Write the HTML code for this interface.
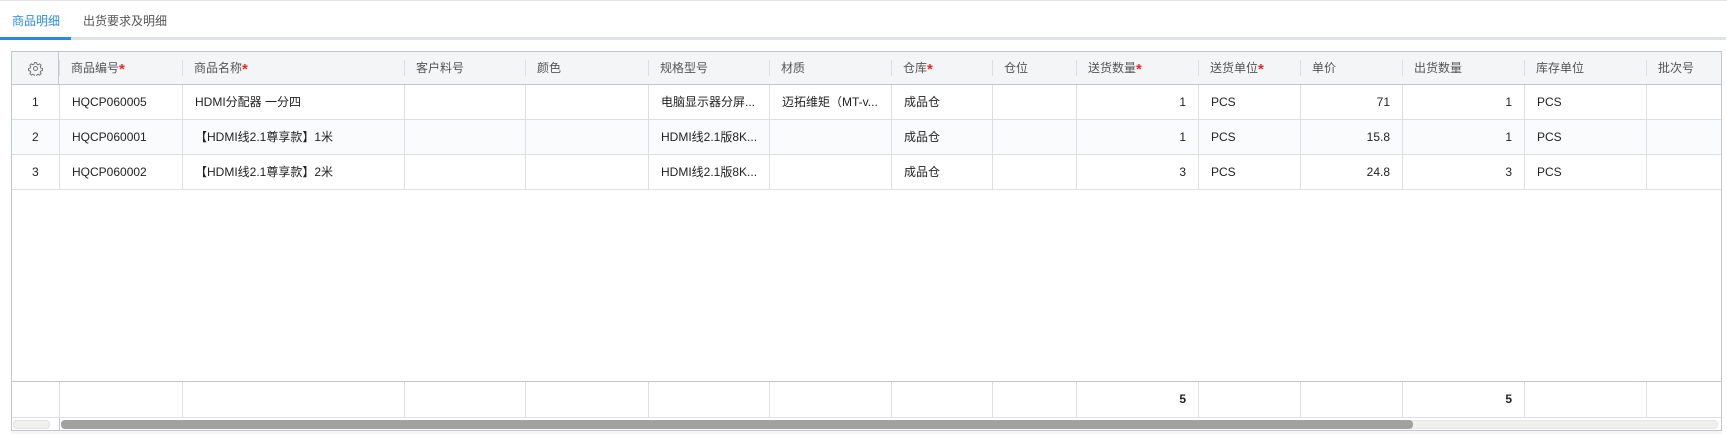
<!DOCTYPE html>
<html><head><meta charset="utf-8"><style>
*{box-sizing:border-box;margin:0;padding:0}
body{width:1727px;height:434px;background:#fff;font-family:"Liberation Sans","Noto Sans CJK SC",sans-serif;font-size:12px;color:#222;position:relative;overflow:hidden}
.topline{position:absolute;left:0;top:0;width:1727px;height:1px;background:#e4e7ea}
.tabs{position:absolute;left:0;top:0;width:1726px;height:40px;border-bottom:3px solid #dfe3e8}
.tab{position:absolute;top:12px;font-size:12px;color:#555}
.tab.a{color:#2a8bde;left:12px}
.ul{position:absolute;left:0;top:37px;width:71px;height:3px;background:#2a8bde}
.box{position:absolute;left:11px;top:51px;width:1711px;height:380px;border:1px solid #c3c7cc}
.cell{position:absolute;height:100%;top:0;white-space:nowrap;overflow:hidden}
.row{position:absolute;left:12px;width:1709px}
.hdr{top:52px;height:33px;background:#f4f5f6;border-bottom:1px solid #c3c7cc;color:#555}
.r{height:35px;border-bottom:1px solid #dcdfe3}
.r .cell{border-left:1px solid #dcdfe3;line-height:34px;padding-left:12px}
.hdr .cell{line-height:33px;padding-left:12px}
.hdr .cell:before{content:"";position:absolute;left:0;top:8px;height:16px;width:1px;background:#dcdfe3}
.hdr .cell.c0:before{display:none}
.hdr .c0{border-right:1px solid #c3c7cc}
.rt{text-align:right;padding-right:12px!important;padding-left:0!important}
.st{color:#f02525;font-weight:bold;font-size:15px;line-height:10px;vertical-align:-2px}
.ft{top:381px;height:37px;border-top:1px solid #c3c7cc;border-bottom:1px solid #dcdfe3}
.ft .cell{border-left:1px solid #dcdfe3;line-height:35px;font-weight:bold}
</style></head><body>
<div class="topline"></div>
<div class="tabs"></div>
<div class="tab a">商品明细</div>
<div class="tab" style="left:83px">出货要求及明细</div>
<div class="ul"></div>
<div class="box"></div>
<div class="row hdr">
<div class="cell c0" style="left:0;width:47px;text-align:center;padding:0"><svg width="15" height="15" viewBox="0 0 24 24" style="margin-top:9px" fill="none" stroke="#777" stroke-width="1.6"><circle cx="12" cy="12" r="3.2"/><path d="M10.3 2.5h3.4l.6 2.6 2 .9 2.3-1.4 2.4 2.4-1.4 2.3.9 2 2.6.6v3.4l-2.6.6-.9 2 1.4 2.3-2.4 2.4-2.3-1.4-2 .9-.6 2.6h-3.4l-.6-2.6-2-.9-2.3 1.4-2.4-2.4 1.4-2.3-.9-2-2.6-.6v-3.4l2.6-.6.9-2-1.4-2.3 2.4-2.4 2.3 1.4 2-.9z"/></svg></div>
<div class="cell" style="left:47px;width:123px">商品编号<span class="st">*</span></div>
<div class="cell" style="left:170px;width:222px">商品名称<span class="st">*</span></div>
<div class="cell" style="left:392px;width:121px">客户料号</div>
<div class="cell" style="left:513px;width:123px">颜色</div>
<div class="cell" style="left:636px;width:121px">规格型号</div>
<div class="cell" style="left:757px;width:122px">材质</div>
<div class="cell" style="left:879px;width:101px">仓库<span class="st">*</span></div>
<div class="cell" style="left:980px;width:84px">仓位</div>
<div class="cell" style="left:1064px;width:122px">送货数量<span class="st">*</span></div>
<div class="cell" style="left:1186px;width:102px">送货单位<span class="st">*</span></div>
<div class="cell" style="left:1288px;width:102px">单价</div>
<div class="cell" style="left:1390px;width:122px">出货数量</div>
<div class="cell" style="left:1512px;width:122px">库存单位</div>
<div class="cell" style="left:1634px;width:75px">批次号</div>
</div>
<div class="row r" style="top:85px">
<div class="cell" style="left:0;width:47px;border:0;padding-left:20px">1</div>
<div class="cell" style="left:47px;width:123px">HQCP060005</div>
<div class="cell" style="left:170px;width:222px">HDMI分配器 一分四</div>
<div class="cell" style="left:392px;width:121px"></div>
<div class="cell" style="left:513px;width:123px"></div>
<div class="cell" style="left:636px;width:121px">电脑显示器分屏...</div>
<div class="cell" style="left:757px;width:122px">迈拓维矩（MT-v...</div>
<div class="cell" style="left:879px;width:101px">成品仓</div>
<div class="cell" style="left:980px;width:84px"></div>
<div class="cell rt" style="left:1064px;width:122px">1</div>
<div class="cell" style="left:1186px;width:102px">PCS</div>
<div class="cell rt" style="left:1288px;width:102px">71</div>
<div class="cell rt" style="left:1390px;width:122px">1</div>
<div class="cell" style="left:1512px;width:122px">PCS</div>
<div class="cell" style="left:1634px;width:75px"></div>
</div>
<div class="row r" style="top:120px;background:#fafbfd">
<div class="cell" style="left:0;width:47px;border:0;padding-left:20px">2</div>
<div class="cell" style="left:47px;width:123px">HQCP060001</div>
<div class="cell" style="left:170px;width:222px">【HDMI线2.1尊享款】1米</div>
<div class="cell" style="left:392px;width:121px"></div>
<div class="cell" style="left:513px;width:123px"></div>
<div class="cell" style="left:636px;width:121px">HDMI线2.1版8K...</div>
<div class="cell" style="left:757px;width:122px"></div>
<div class="cell" style="left:879px;width:101px">成品仓</div>
<div class="cell" style="left:980px;width:84px"></div>
<div class="cell rt" style="left:1064px;width:122px">1</div>
<div class="cell" style="left:1186px;width:102px">PCS</div>
<div class="cell rt" style="left:1288px;width:102px">15.8</div>
<div class="cell rt" style="left:1390px;width:122px">1</div>
<div class="cell" style="left:1512px;width:122px">PCS</div>
<div class="cell" style="left:1634px;width:75px"></div>
</div>
<div class="row r" style="top:155px">
<div class="cell" style="left:0;width:47px;border:0;padding-left:20px">3</div>
<div class="cell" style="left:47px;width:123px">HQCP060002</div>
<div class="cell" style="left:170px;width:222px">【HDMI线2.1尊享款】2米</div>
<div class="cell" style="left:392px;width:121px"></div>
<div class="cell" style="left:513px;width:123px"></div>
<div class="cell" style="left:636px;width:121px">HDMI线2.1版8K...</div>
<div class="cell" style="left:757px;width:122px"></div>
<div class="cell" style="left:879px;width:101px">成品仓</div>
<div class="cell" style="left:980px;width:84px"></div>
<div class="cell rt" style="left:1064px;width:122px">3</div>
<div class="cell" style="left:1186px;width:102px">PCS</div>
<div class="cell rt" style="left:1288px;width:102px">24.8</div>
<div class="cell rt" style="left:1390px;width:122px">3</div>
<div class="cell" style="left:1512px;width:122px">PCS</div>
<div class="cell" style="left:1634px;width:75px"></div>
</div>
<div class="row ft">
<div class="cell" style="left:0;width:47px;border:0"></div>
<div class="cell" style="left:47px;width:123px"></div>
<div class="cell" style="left:170px;width:222px"></div>
<div class="cell" style="left:392px;width:121px"></div>
<div class="cell" style="left:513px;width:123px"></div>
<div class="cell" style="left:636px;width:121px"></div>
<div class="cell" style="left:757px;width:122px"></div>
<div class="cell" style="left:879px;width:101px"></div>
<div class="cell" style="left:980px;width:84px"></div>
<div class="cell rt" style="left:1064px;width:122px">5</div>
<div class="cell" style="left:1186px;width:102px"></div>
<div class="cell" style="left:1288px;width:102px"></div>
<div class="cell rt" style="left:1390px;width:122px">5</div>
<div class="cell" style="left:1512px;width:122px"></div>
<div class="cell" style="left:1634px;width:75px"></div>
</div>
<div style="position:absolute;left:13px;top:420px;width:37px;height:9px;border-radius:4px;background:#f0f0f0;border:1px solid #e2e2e2"></div>
<div style="position:absolute;left:59px;top:418px;width:1px;height:12px;background:#c3c7cc"></div>
<div style="position:absolute;left:61px;top:420px;width:1657px;height:9px;border-radius:4px;background:#f0f0f0;border:1px solid #e6e6e6"></div>
<div style="position:absolute;left:61px;top:420px;width:1352px;height:9px;border-radius:4px;background:#a1a1a1"></div>
<div style="position:absolute;left:11px;top:431px;width:1711px;height:3px;background:#f6f6f6"></div>
</body></html>
